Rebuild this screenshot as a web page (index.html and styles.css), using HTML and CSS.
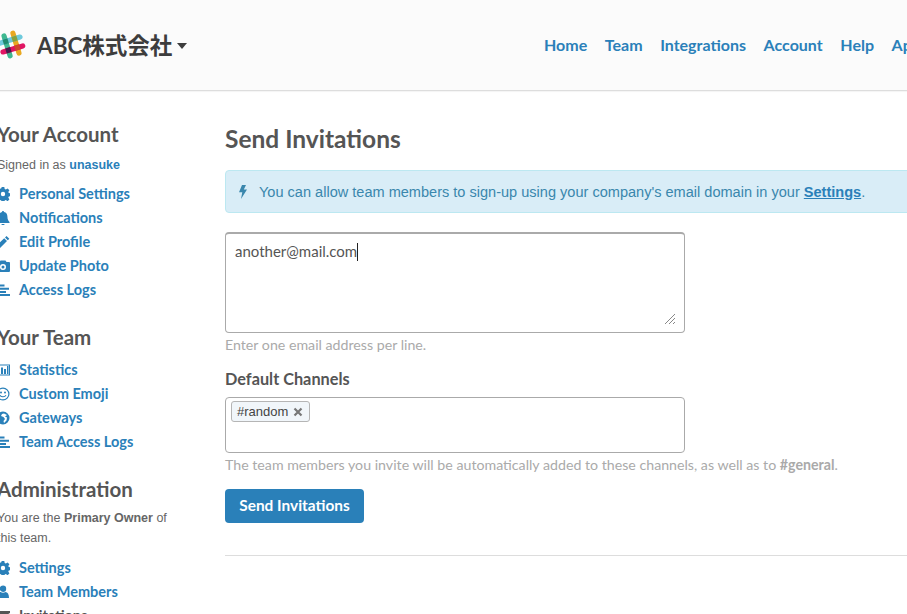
FILE: index.html
```html
<!DOCTYPE html>
<html lang="en">
<head>
    <meta charset="UTF-8">
    <meta name="viewport" content="width=device-width, initial-scale=1.0">
    <title>Send Invitations</title>
    <link rel="stylesheet" href="styles.css">
</head>
<body>
    <svg class="defs" width="0" height="0" aria-hidden="true">
        <symbol id="i-gear" viewBox="0 0 14 14">
            <path fill-rule="evenodd" d="M5.700 0h2.600l.4 2 1.100.5 1.800-1.100 1.800 1.800-1.100 1.800.5 1.100 2 .4v2.600l-2 .4-.5 1.100 1.100 1.800-1.800 1.800-1.800-1.100-1.100.5-.4 2H5.700l-.4-2-1.100-.5-1.800 1.100-1.800-1.800 1.100-1.800-.5-1.100-2-.4V5.700l2-.4.5-1.100-1.100-1.800 1.800-1.800 1.800 1.100 1.100-.5zM7 4.800a2.200 2.200 0 1 0 0 4.400 2.200 2.200 0 0 0 0-4.400z"/>
        </symbol>
        <symbol id="i-logs" viewBox="0 0 14 14">
            <path d="M0 1.500h8.500v2H0zM0 4.700h13v2H0zM0 7.900h10v2H0zM0 11.100h14v2H0z"/>
        </symbol>
    </svg>

    <header class="topbar">
        <div class="team-menu">
            <svg class="logo" viewBox="0 0 30 30" aria-hidden="true">
                <g transform="rotate(-17 15 15)" stroke-width="5" stroke-linecap="round">
                    <path d="M10.500 5v20" stroke="#3eb890"/>
                    <path d="M19.500 5v20" stroke="#e9a820"/>
                    <path d="M5 10.500h20" stroke="#6ecadc"/>
                    <path d="M5 19.500h20" stroke="#e01563"/>
                    <path d="M8 8h5v5H8z" fill="#1f8a70" stroke="none"/>
                    <path d="M17 8h5v5h-5z" fill="#89a13b" stroke="none"/>
                    <path d="M8 17h5v5H8z" fill="#4a1a4c" stroke="none"/>
                    <path d="M17 17h5v5h-5z" fill="#d0452c" stroke="none"/>
                </g>
            </svg>
            <span class="team-name">ABC株式会社</span>
            <span class="caret"></span>
        </div>
        <nav class="top-nav">
            <a href="#">Home</a>
            <a href="#">Team</a>
            <a href="#">Integrations</a>
            <a href="#">Account</a>
            <a href="#">Help</a>
            <a href="#">Apps</a>
        </nav>
    </header>

    <div class="page">
        <aside class="sidebar">
            <h2>Your Account</h2>
            <p class="note">Signed in as <a href="#">unasuke</a></p>
            <ul class="side-links">
                <li><a href="#"><svg class="ico"><use href="#i-gear"/></svg>Personal Settings</a></li>
                <li><a href="#"><svg class="ico" viewBox="0 0 14 14"><path d="M7 0c.6 0 1 .4 1 1 2.300.5 3.400 2.300 3.400 4.500 0 3 1 4.300 2.100 5.500v1H.500v-1c1.100-1.200 2.100-2.500 2.100-5.500C2.600 3.300 3.700 1.500 6 1c0-.6.4-1 1-1zM5.500 13h3a1.500 1.500 0 0 1-3 0z"/></svg>Notifications</a></li>
                <li><a href="#"><svg class="ico" viewBox="0 0 14 14"><path d="M10.500 1l2.800 2.800-1.500 1.500L9 2.500zM8.200 3.300L11 6.100 4 13H1v-3z"/></svg>Edit Profile</a></li>
                <li><a href="#"><svg class="ico" viewBox="0 0 14 14"><path fill-rule="evenodd" d="M4.500 1.500h5L10.500 3H13a1 1 0 0 1 1 1v8a1 1 0 0 1-1 1H1a1 1 0 0 1-1-1V4a1 1 0 0 1 1-1h2.500zM7 5a3 3 0 1 0 0 6 3 3 0 0 0 0-6zm0 1.500a1.500 1.500 0 1 1 0 3 1.500 1.500 0 0 1 0-3z"/></svg>Update Photo</a></li>
                <li><a href="#"><svg class="ico"><use href="#i-logs"/></svg>Access Logs</a></li>
            </ul>

            <h2>Your Team</h2>
            <ul class="side-links after-title">
                <li><a href="#"><svg class="ico" viewBox="0 0 14 14"><path fill-rule="evenodd" d="M0 1.500h14v11H0zm1 1v9h12v-9zM2 7h2v4H2zm3-2.500h2V11H5zM8 6h2v5H8zm3-3h1.500v8H11z"/></svg>Statistics</a></li>
                <li><a href="#"><svg class="ico" viewBox="0 0 14 14"><circle cx="7" cy="7" r="5.900" fill="none" stroke="currentColor" stroke-width="1.200"/><circle cx="5" cy="5.400" r="1"/><circle cx="9" cy="5.400" r="1"/><path d="M4 8.300c1.200 2 4.800 2 6 0" fill="none" stroke="currentColor" stroke-width="1.100"/></svg>Custom Emoji</a></li>
                <li><a href="#"><svg class="ico" viewBox="0 0 14 14"><path fill-rule="evenodd" d="M7 .5a6.500 6.500 0 1 1 0 13 6.500 6.500 0 0 1 0-13zM8 2.500l-2 .5-1 2 2.500 1L9 8l-1.500 2 .5 2 2.500-2.500.5-3-2-1 2-1.500z"/></svg>Gateways</a></li>
                <li><a href="#"><svg class="ico"><use href="#i-logs"/></svg>Team Access Logs</a></li>
            </ul>

            <h2>Administration</h2>
            <p class="note note-long">You are the <strong>Primary Owner</strong> of this team.</p>
            <ul class="side-links">
                <li><a href="#"><svg class="ico"><use href="#i-gear"/></svg>Settings</a></li>
                <li><a href="#"><svg class="ico" viewBox="0 0 14 14"><circle cx="7" cy="3.700" r="3.200"/><path d="M1 13c0-4 1.500-6 3.500-6 1.500 1 3.500 1 5 0 2 0 3.500 2 3.500 6z"/></svg>Team Members</a></li>
                <li class="current"><a href="#"><svg class="ico" viewBox="0 0 14 14"><path d="M0 2h14v2L7 8 0 4zM0 5.500l7 4 7-4V12H0z"/></svg>Invitations</a></li>
            </ul>
        </aside>

        <main class="content">
            <h1>Send Invitations</h1>

            <div class="alert">
                <svg class="bolt" viewBox="0 0 8 14" aria-hidden="true"><path d="M3 0h4L4.800 4.500H8L2 14l1.300-6.700H0z"/></svg>
                <span>You can allow team members to sign-up using your company's email domain in your <a href="#">Settings</a>.</span>
            </div>

            <div class="email-box">
                <span>another@mail.com</span><span class="text-caret"></span>
                <svg class="grip" viewBox="0 0 12 12" aria-hidden="true"><path d="M1 11L11 1M5 11l6-6M9 11l2-2" stroke="#888" fill="none"/></svg>
            </div>
            <p class="help help-tight">Enter one email address per line.</p>

            <label class="field-label">Default Channels</label>
            <div class="channel-box">
                <span class="tag">#random<svg class="tag-x" viewBox="0 0 10 10" aria-hidden="true"><path d="M1.500 1.500l7 7M8.500 1.500l-7 7" stroke="#777" stroke-width="2.200" fill="none"/></svg></span>
            </div>
            <p class="help help-tight">The team members you invite will be automatically added to these channels, as well as to <strong>#general</strong>.</p>

            <button class="btn">Send Invitations</button>
            <hr class="rule">
        </main>
    </div>
</body>
</html>
```

FILE: styles.css
```css
html, body {
    margin: 0;
    height: 614px;
    overflow: hidden;
}
body {
    font-family: Lato, "Noto Sans CJK JP", sans-serif;
    background-color: #fff;
    color: #555;
}
a {
    color: #2a80b9;
    text-decoration: none;
}
.defs {
    position: absolute;
}

.topbar {
    display: flex;
    align-items: center;
    box-sizing: border-box;
    height: 91px;
    padding-bottom: 2px;
    background-color: #fbfbfb;
    border-bottom: 1px solid #ddd;
    box-shadow: 0 1px 1px rgba(0, 0, 0, 0.04);
    overflow: hidden;
}
.team-menu {
    display: flex;
    align-items: center;
    width: 544px;
    flex-shrink: 0;
}
.logo {
    width: 31px;
    height: 31px;
    margin-left: -4px;
    margin-right: 10px;
}
.team-name {
    font-size: 22.5px;
    font-weight: 700;
    color: #3d3d3d;
}
.caret {
    margin: 3px 0 0 5px;
    border-left: 5.500px solid transparent;
    border-right: 5.500px solid transparent;
    border-top: 6px solid #3d3d3d;
}
.top-nav {
    display: flex;
    gap: 17.6px;
    flex-shrink: 0;
    font-size: 16px;
    font-weight: 700;
}

.page {
    display: flex;
}
.sidebar {
    width: 195px;
    flex-shrink: 0;
    margin-left: -3px;
    padding-top: 30px;
    margin-right: 33px;
}
.sidebar h2 {
    margin: 0;
    font-size: 20.5px;
    line-height: 26px;
    font-weight: 700;
    color: #555;
}
.note {
    margin: 8px 0 0;
    width: 178px;
    font-family: "Liberation Sans", sans-serif;
    font-size: 12.5px;
    line-height: 20px;
    color: #666;
}
.note-long {
    margin: 6px 0 8px;
}
.note a, .note strong {
    font-weight: 700;
}
.side-links {
    list-style: none;
    margin: 7px 0 22px;
    padding: 0;
    font-size: 14.500px;
    font-weight: 700;
    line-height: 24px;
}
.after-title {
    margin-top: 8px;
}
.side-links a {
    display: flex;
    align-items: center;
}
.current a {
    color: #555;
}
.ico {
    width: 14px;
    height: 14px;
    margin-left: -1px;
    margin-right: 9px;
    fill: currentColor;
    flex-shrink: 0;
}

.content {
    width: 800px;
    flex-shrink: 0;
}
.content h1 {
    margin: 31px 0 14px;
    font-size: 24.5px;
    line-height: 34px;
    font-weight: 700;
    color: #555;
}
.alert {
    display: flex;
    align-items: center;
    height: 41px;
    padding-left: 13px;
    background-color: #d9edf7;
    border: 1px solid #bce8f1;
    border-radius: 4px;
    font-family: "Liberation Sans", sans-serif;
    font-size: 14.56px;
    color: #3a87ad;
}
.alert a {
    font-weight: 700;
    text-decoration: underline;
}
.bolt {
    width: 8px;
    height: 14px;
    margin-right: 12px;
    fill: #3a87ad;
}
.email-box {
    position: relative;
    box-sizing: border-box;
    width: 460px;
    height: 101px;
    margin-top: 19px;
    padding: 7px 9px;
    border: 1px solid #aaa;
    border-top: 2px solid #aaa;
    border-radius: 4px;
    font-size: 15px;
    line-height: 20px;
    color: #555;
}
.text-caret {
    display: inline-block;
    width: 1px;
    height: 18px;
    background-color: #222;
    vertical-align: -4px;
}
.grip {
    position: absolute;
    right: 8px;
    bottom: 7px;
    width: 12px;
    height: 12px;
}
.help {
    margin: 3px 0 0;
    font-size: 14.2px;
    line-height: 20px;
    color: #aaa;
}
.help-tight {
    margin-top: 2px;
}
.help strong {
    font-weight: 700;
}
.field-label {
    display: block;
    margin-top: 14px;
    font-size: 16.3px;
    font-weight: 700;
    line-height: 20px;
    color: #555;
}
.channel-box {
    box-sizing: border-box;
    width: 460px;
    height: 56px;
    margin-top: 8px;
    padding: 3px 5px;
    border: 1px solid #aaa;
    border-radius: 4px;
}
.tag {
    display: flex;
    align-items: center;
    gap: 5px;
    width: 79px;
    box-sizing: border-box;
    height: 21px;
    padding: 0 5px;
    background-color: #f1f6fa;
    border: 1px solid #b5b5b5;
    border-radius: 3px;
    font-family: "Liberation Sans", sans-serif;
    font-size: 13px;
    color: #444;
}
.tag-x {
    width: 10px;
    height: 10px;
}
.btn {
    display: block;
    width: 139px;
    height: 34px;
    margin-top: 14px;
    padding: 0 0 2px;
    background-color: #2a80b9;
    color: #fff;
    border: none;
    border-radius: 4px;
    font-family: Lato, sans-serif;
    font-size: 15.4px;
    font-weight: 700;
}
.rule {
    margin: 32px 0 0;
    border: none;
    border-top: 1px solid #ddd;
}
```
